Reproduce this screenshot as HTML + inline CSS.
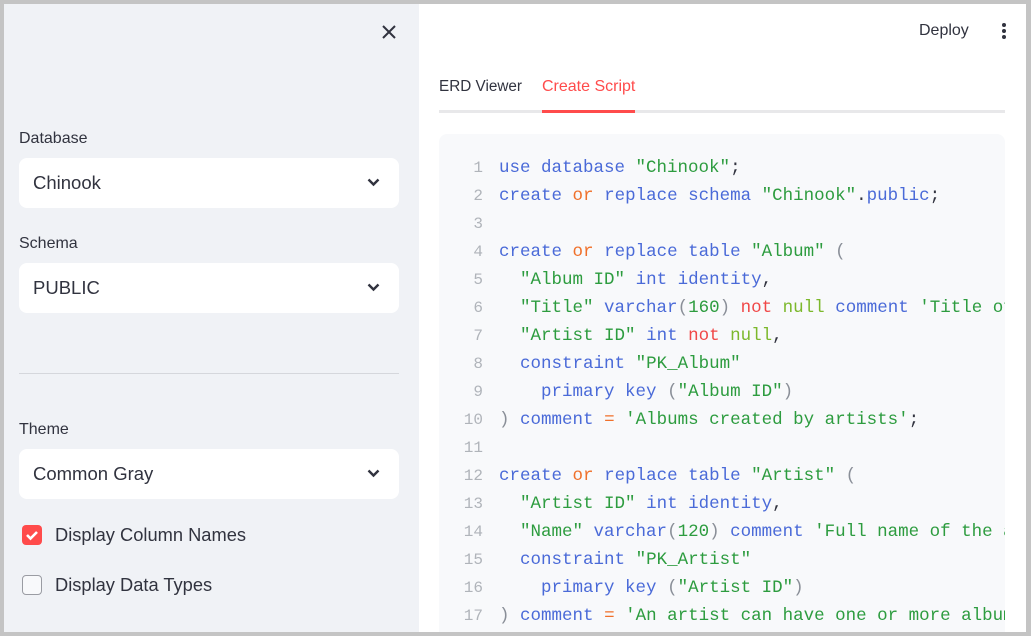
<!DOCTYPE html>
<html><head><style>
*{margin:0;padding:0;box-sizing:border-box}
body{width:1031px;height:636px;overflow:hidden;background:#c4c4c4;font-family:"Liberation Sans",sans-serif;position:relative}
.side{position:absolute;left:4px;top:4px;width:415px;height:628px;background:#f0f2f6}
.main{position:absolute;left:419px;top:4px;width:607px;height:628px;background:#fff;overflow:hidden}
.lbl{position:absolute;left:15px;font-size:16px;color:#31333f}
.sel{position:absolute;left:15px;width:380px;height:50px;background:#fff;border-radius:8px;font-size:18.5px;color:#31333f;padding:14px 14px}
.sel svg{position:absolute;right:19px;top:20px}
.cb{position:absolute;left:18px;width:20px;height:20px;border-radius:4px}
.cbt{position:absolute;left:51px;font-size:18.3px;color:#31333f}
.code{position:absolute;left:20px;top:130px;width:566px;height:520px;background:#f8f9fb;border-radius:8px;overflow:hidden}
pre{font-family:"Liberation Mono",monospace;font-size:17.5px;line-height:28px;position:absolute;top:20px;left:0;white-space:pre;color:#31333f}
.n{display:inline-block;width:44px;text-align:right;color:#b0b4ba;margin-right:16px;font-size:16px}
.k{color:#4a6ad8}.s{color:#2d9c3f}.o{color:#f0702a}.r{color:#f04848}.g{color:#7cb82c}.p{color:#8a8f98}
</style></head><body>
<div class="side">
  <svg style="position:absolute;left:378px;top:21px" width="14" height="14" viewBox="0 0 14 14"><path d="M1 1L13 13M13 1L1 13" stroke="#31333f" stroke-width="2"/></svg>
  <div class="lbl" style="top:126px">Database</div>
  <div class="sel" style="top:154px">Chinook<svg width="13" height="9" viewBox="0 0 13 9"><path d="M1.5 1.5L6.5 6.5L11.5 1.5" stroke="#31333f" stroke-width="2.4" fill="none"/></svg></div>
  <div class="lbl" style="top:231px">Schema</div>
  <div class="sel" style="top:259px">PUBLIC<svg width="13" height="9" viewBox="0 0 13 9"><path d="M1.5 1.5L6.5 6.5L11.5 1.5" stroke="#31333f" stroke-width="2.4" fill="none"/></svg></div>
  <div style="position:absolute;left:15px;top:369px;width:380px;height:1px;background:#d5d7dc"></div>
  <div class="lbl" style="top:417px">Theme</div>
  <div class="sel" style="top:445px">Common Gray<svg width="13" height="9" viewBox="0 0 13 9"><path d="M1.5 1.5L6.5 6.5L11.5 1.5" stroke="#31333f" stroke-width="2.4" fill="none"/></svg></div>
  <div class="cb" style="top:521px;background:#ff4b4b"><svg width="20" height="20" viewBox="0 0 20 20"><path d="M5 10L8.5 13.5L15 7" stroke="#fff" stroke-width="2.6" fill="none"/></svg></div>
  <div class="cbt" style="top:520px">Display Column Names</div>
  <div class="cb" style="top:571px;background:#f8f9fb;border:1px solid #9a9ca3"></div>
  <div class="cbt" style="top:570px">Display Data Types</div>
</div>
<div class="main">
  <div style="position:absolute;left:500px;top:18px;font-size:16px;color:#31333f">Deploy</div>
  <div style="position:absolute;left:583px;top:19px;width:4px">
    <div style="width:4px;height:4px;border-radius:2px;background:#31333f;margin-bottom:2px"></div>
    <div style="width:4px;height:4px;border-radius:2px;background:#31333f;margin-bottom:2px"></div>
    <div style="width:4px;height:4px;border-radius:2px;background:#31333f"></div>
  </div>
  <div style="position:absolute;left:20px;top:74px;font-size:15.3px;color:#31333f">ERD Viewer</div>
  <div style="position:absolute;left:123px;top:74px;font-size:16px;color:#ff4b4b">Create Script</div>
  <div style="position:absolute;left:20px;top:106px;width:566px;height:3px;background:#e8e8ea"></div>
  <div style="position:absolute;left:123px;top:106px;width:93px;height:3px;background:#ff4b4b"></div>
  <div class="code"><pre><span class="n">1</span><span class="k">use database</span> <span class="s">"Chinook"</span>;
<span class="n">2</span><span class="k">create</span> <span class="o">or</span> <span class="k">replace schema</span> <span class="s">"Chinook"</span>.<span class="k">public</span>;
<span class="n">3</span>
<span class="n">4</span><span class="k">create</span> <span class="o">or</span> <span class="k">replace table</span> <span class="s">"Album"</span> <span class="p">(</span>
<span class="n">5</span>  <span class="s">"Album ID"</span> <span class="k">int identity</span>,
<span class="n">6</span>  <span class="s">"Title"</span> <span class="k">varchar</span><span class="p">(</span><span class="s">160</span><span class="p">)</span> <span class="r">not</span> <span class="g">null</span> <span class="k">comment</span> <span class="s">'Title of the album'</span>,
<span class="n">7</span>  <span class="s">"Artist ID"</span> <span class="k">int</span> <span class="r">not</span> <span class="g">null</span>,
<span class="n">8</span>  <span class="k">constraint</span> <span class="s">"PK_Album"</span>
<span class="n">9</span>    <span class="k">primary key</span> <span class="p">(</span><span class="s">"Album ID"</span><span class="p">)</span>
<span class="n">10</span><span class="p">)</span> <span class="k">comment</span> <span class="o">=</span> <span class="s">'Albums created by artists'</span>;
<span class="n">11</span>
<span class="n">12</span><span class="k">create</span> <span class="o">or</span> <span class="k">replace table</span> <span class="s">"Artist"</span> <span class="p">(</span>
<span class="n">13</span>  <span class="s">"Artist ID"</span> <span class="k">int identity</span>,
<span class="n">14</span>  <span class="s">"Name"</span> <span class="k">varchar</span><span class="p">(</span><span class="s">120</span><span class="p">)</span> <span class="k">comment</span> <span class="s">'Full name of the artist'</span>,
<span class="n">15</span>  <span class="k">constraint</span> <span class="s">"PK_Artist"</span>
<span class="n">16</span>    <span class="k">primary key</span> <span class="p">(</span><span class="s">"Artist ID"</span><span class="p">)</span>
<span class="n">17</span><span class="p">)</span> <span class="k">comment</span> <span class="o">=</span> <span class="s">'An artist can have one or more albums'</span>;
</pre></div>
</div>
</body></html>
